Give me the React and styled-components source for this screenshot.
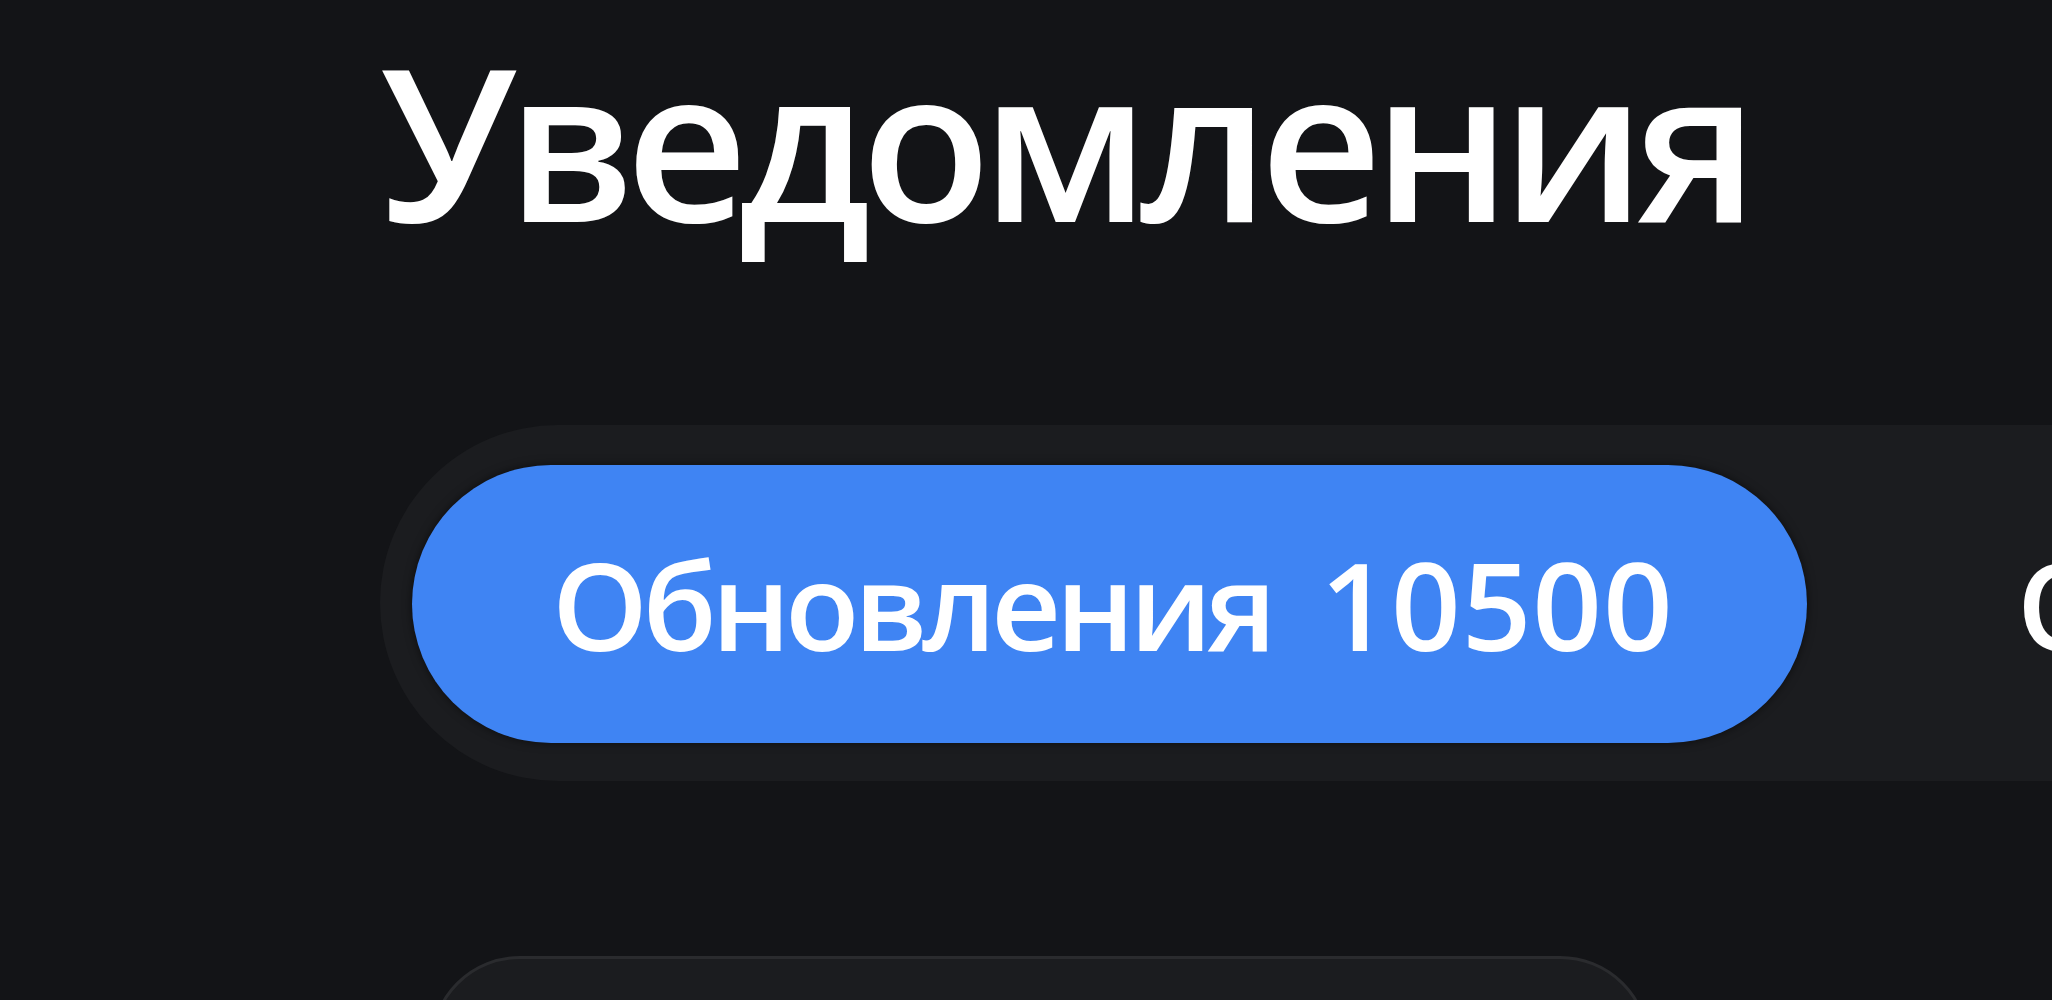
import styled, { createGlobalStyle } from 'styled-components';

const GlobalStyle = createGlobalStyle`
  html, body {
    margin: 0;
    padding: 0;
    background: #131417;
    overflow: hidden;
  }
  body {
    font-family: "Open Sans", "Noto Sans", sans-serif;
    color: #ffffff;
  }
`

const Page = styled.div`
  min-height: 1000px;
  padding: 33px 0 0 380px;
  box-sizing: border-box;
`

const Title = styled.h1`
  margin: 0;
  font-size: 213px;
  font-weight: 600;
  line-height: 1;
  letter-spacing: -9.6px;
  white-space: nowrap;
`

const TabBar = styled.div`
  display: flex;
  align-items: center;
  gap: 70px;
  width: max-content;
  margin-top: 179px;
  padding: 40px 120px 38px 32px;
  background: #1b1c1f;
  border-radius: 200px;
`

const Tab = styled.div`
  display: flex;
  align-items: center;
  gap: 49px;
  flex-shrink: 0;
  height: 278px;
  padding: 0 133px 0 140px;
  border-radius: 139px;
  background: ${p => (p.active ? '#3f84f3' : 'transparent')};
  box-shadow: ${p => (p.active ? '0 0 10px rgba(0,0,0,0.55)' : 'none')};
  font-size: 122px;
  font-weight: 600;
  color: #ffffff;
  white-space: nowrap;
`

const Label = styled.span`
  letter-spacing: -5.4px;
`

const Count = styled.span`
  letter-spacing: 0.9px;
`

const Card = styled.div`
  margin: 175px 0 0 50px;
  width: 1220px;
  height: 400px;
  box-sizing: border-box;
  background: #1b1c1f;
  border: 3px solid #2a2b2e;
  border-radius: 90px;
`

const tabs = [
  { label: 'Обновления', count: 10500, active: true },
  { label: 'Ответы', count: 24 },
]

export default function App() {
  return (
    <>
      <GlobalStyle />
      <Page>
        <Title>Уведомления</Title>
        <TabBar>
          {tabs.map(t => (
            <Tab key={t.label} active={t.active}>
              <Label>{t.label}</Label>
              <Count>{t.count}</Count>
            </Tab>
          ))}
        </TabBar>
        <Card />
      </Page>
    </>
  );
}
